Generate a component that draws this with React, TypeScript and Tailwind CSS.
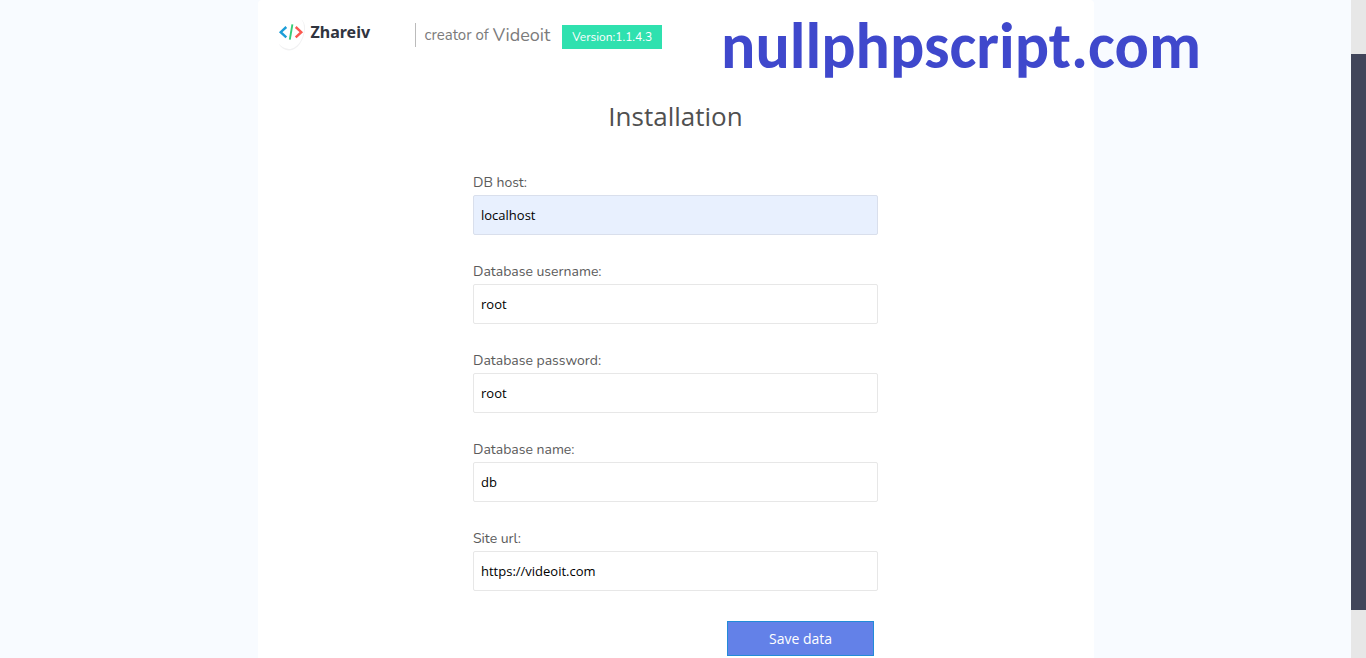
import React from "react";

type Field = { id: string; label: string; value: string; autofilled?: boolean };

const fields: Field[] = [
  { id: "db-host", label: "DB host:", value: "localhost", autofilled: true },
  { id: "db-user", label: "Database username:", value: "root" },
  { id: "db-password", label: "Database password:", value: "root" },
  { id: "db-name", label: "Database name:", value: "db" },
  { id: "site-url", label: "Site url:", value: "https://videoit.com" },
];

function Logo() {
  return (
    <a href="#" className="flex h-9 w-[137px] items-start gap-[3px] text-[#30343f]">
      <svg viewBox="0 0 30 36" className="h-9 w-[30px]" fill="none" aria-hidden="true">
        <path d="M18 3C25 4 27.5 8 27 14C26 25 20 35 11 35.500C6 35 2 32 1 29" fill="#f1f1f2" />
        <path d="M3 2C16-1 26 1 26 13C26 24 19 34 11 34C5 33 1 30 0 27Z" fill="#fff" />
        <g strokeWidth="2.400">
          <path d="M8.300 12L2.700 17.200L8.300 22.400" stroke="#1c9ed8" />
          <path d="M14.400 9.300L11.800 24.700" stroke="#35cc78" strokeWidth="1.900" />
          <path d="M17.700 12L23.300 17.200L17.700 22.400" stroke="#fb594f" />
        </g>
      </svg>
      <span className="pt-[5px] font-['Noto_Sans',sans-serif] text-[16px] leading-6 font-bold">Zhareiv</span>
    </a>
  );
}

function TextField({ id, label, value, autofilled }: Field) {
  return (
    <div>
      <label htmlFor={id} className="block h-6 font-['Nunito','Open_Sans',sans-serif] text-[14px] leading-6 text-[#5b5b5b]">
        {label}
      </label>
      <input
        id={id}
        type="text"
        defaultValue={value}
        className={`block h-10 w-full rounded-xs border px-[7px] text-[13px] text-black outline-none ${
          autofilled ? "border-[#d9dfec] bg-[#e8f0fe]" : "border-[#e7e7e7] bg-white"
        }`}
      />
    </div>
  );
}

export default function App() {
  return (
    <div className="flex min-h-screen bg-[#f8fbff] font-['Open_Sans',sans-serif]">
      <div className="relative flex min-w-0 flex-1 justify-center">
        <main className="w-full max-w-[836px] rounded-t bg-white">
          <header className="flex items-start pt-[15px] pl-5">
            <Logo />
            <div className="mt-2 flex h-6 items-center border-l border-[#bbb] pl-[9px] text-[#7b7b7b]">
              <span className="font-['Nunito','Open_Sans',sans-serif] text-[15px]">creator of</span>
              <span className="ml-1 font-['Nunito','Open_Sans',sans-serif] text-lg">Videoit</span>
            </div>
            <span className="mt-[10px] ml-3 flex h-6 w-[100px] items-center justify-center bg-[#2fe1af] font-['Nunito','Open_Sans',sans-serif] text-[12px] text-white">
              Version:1.1.4.3
            </span>
          </header>
          <h1 className="mt-[47px] text-center text-[26px] leading-9 text-[#505050]">Installation</h1>
          <form className="mx-auto mt-[37px] w-[405px] max-w-full" onSubmit={(event) => event.preventDefault()}>
            <div className="flex flex-col gap-[25px]">
              {fields.map((field) => (
                <TextField key={field.id} {...field} />
              ))}
            </div>
            <div className="mt-[30px] flex justify-end pr-1">
              <button type="submit" className="h-[35px] w-[147px] border border-[#238bd8] bg-[#6381e8] text-[14px] text-white">
                Save data
              </button>
            </div>
          </form>
        </main>
        <p className="pointer-events-none absolute top-2 right-[150px] font-['Carlito','Lato',sans-serif] text-[64px] leading-[76px] font-bold text-[#3f48cc]">
          nullphpscript.com
        </p>
      </div>
      <div className="flex w-[15px] shrink-0 bg-[#e7e7e7] pt-[54px] pb-12" aria-hidden="true">
        <div className="flex-1 bg-[#41455a]" />
      </div>
    </div>
  );
}
